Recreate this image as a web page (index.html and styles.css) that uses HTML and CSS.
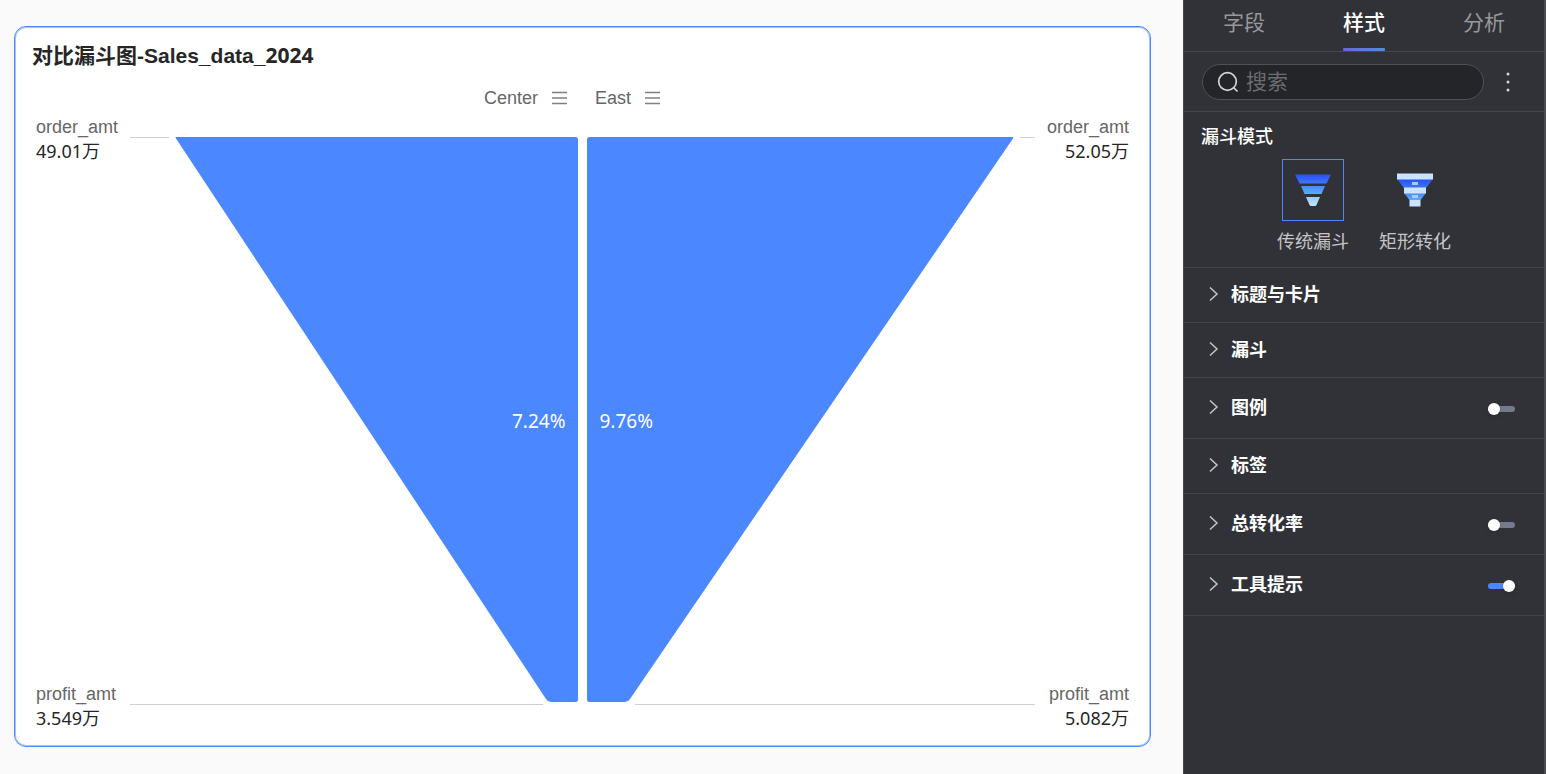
FILE: index.html
```html
<!DOCTYPE html>
<html lang="zh-CN">
<head>
<meta charset="utf-8">
<title>对比漏斗图</title>
<link rel="stylesheet" href="styles.css">
</head>
<body>
<div class="app">
  <main class="canvas">
    <section class="card">
      <h1 class="card-title">对比漏斗图-Sales_data_<span class="num">2024</span></h1>
      <div class="legend">
        <span class="legend-item">Center
          <svg class="menu-icon" width="16" height="14" viewBox="0 0 16 14"><path d="M0 1.5h15M0 7h15M0 12.5h15"/></svg>
        </span>
        <span class="legend-item">East
          <svg class="menu-icon" width="16" height="14" viewBox="0 0 16 14"><path d="M0 1.5h15M0 7h15M0 12.5h15"/></svg>
        </span>
      </div>
      <div class="chart">
        <div class="axis">
          <div class="stage"><span class="stage-name">order_amt</span><span class="stage-value">49.01万</span></div>
          <div class="stage"><span class="stage-name">profit_amt</span><span class="stage-value">3.549万</span></div>
        </div>
        <div class="plot">
          <svg class="funnel" viewBox="0 0 905 615" preserveAspectRatio="none">
            <path class="leader" d="M0 22.5H39M890 22.5H905M0 589.5H413M505 589.5H905"/>
            <path class="shape" d="M45.500 22H445.500Q448 22 448 24.500V584.500Q448 587 445.500 587H421Q418 587 416 584L46 23.500Z"/>
            <path class="shape" d="M883.500 22H459.500Q457 22 457 24.500V584.500Q457 587 459.500 587H495Q498 587 500 584L883 23.500Z"/>
          </svg>
          <div class="rates"><span class="rate rate-left">7.24%</span><span class="rate">9.76%</span></div>
        </div>
        <div class="axis axis-right">
          <div class="stage"><span class="stage-name">order_amt</span><span class="stage-value">52.05万</span></div>
          <div class="stage"><span class="stage-name">profit_amt</span><span class="stage-value">5.082万</span></div>
        </div>
      </div>
    </section>
  </main>

  <aside class="panel">
    <nav class="tabs">
      <button class="tab" type="button">字段</button>
      <button class="tab active" type="button">样式</button>
      <button class="tab" type="button">分析</button>
    </nav>
    <div class="search-row">
      <label class="search">
        <svg width="22" height="22" viewBox="0 0 22 22" fill="none" stroke="#d4d5d7" stroke-width="1.700"><circle cx="10.500" cy="10.500" r="8.800"/><path d="M16.500 16.500L20.500 20.500"/></svg>
        <input class="search-input" type="text" placeholder="搜索" aria-label="搜索">
      </label>
      <button class="more" type="button" aria-label="更多">
        <svg width="4" height="20" viewBox="0 0 4 20" fill="#d4d5d7"><circle cx="2" cy="2" r="1.500"/><circle cx="2" cy="10" r="1.500"/><circle cx="2" cy="18" r="1.500"/></svg>
      </button>
    </div>
    <section class="mode">
      <h2 class="mode-title">漏斗模式</h2>
      <div class="mode-options">
        <button class="option selected" type="button">
          <span class="option-box">
            <svg width="38" height="36" viewBox="0 0 38 36">
              <defs>
                <linearGradient id="deep" x1="0" y1="0" x2="0" y2="1"><stop offset="0" stop-color="#2850f5"/><stop offset="1" stop-color="#3f76fc"/></linearGradient>
                <linearGradient id="sky" x1="0" y1="0" x2="0" y2="1"><stop offset="0" stop-color="#448af8"/><stop offset="1" stop-color="#5fabff"/></linearGradient>
                <linearGradient id="pale" x1="0" y1="0" x2="0" y2="1"><stop offset="0" stop-color="#9cc8fc"/><stop offset="1" stop-color="#c0e6fd"/></linearGradient>
              </defs>
              <path fill="url(#deep)" d="M1 2.500H37L32.500 11.500H5.500Z"/>
              <path fill="url(#sky)" d="M7 14H31L27.500 22H10.500Z"/>
              <path fill="url(#pale)" d="M12 25H26L22.500 33Q22 34 21 34H17Q16 34 15.500 33Z"/>
            </svg>
          </span>
          传统漏斗
        </button>
        <button class="option" type="button">
          <span class="option-box">
            <svg width="38" height="36" viewBox="0 0 38 36">
              <path fill="url(#deep)" d="M1 7H37L30 16H8Z"/>
              <path fill="url(#sky)" d="M8 21H30L24.500 28H13.500Z"/>
              <path fill="#cbe4fd" d="M1 1.500H37V7.500H1ZM8 15.500H30V21.500H8ZM13.500 28H24.500V34.500H13.500Z"/>
              <path fill="#a9c9ff" d="M16 10H22V13H16ZM16 23H22V26H16Z"/>
            </svg>
          </span>
          矩形转化
        </button>
      </div>
    </section>
    <div class="row"><button class="row-name" type="button"><svg class="chevron" width="10" height="16" viewBox="0 0 10 16"><path d="M1 0.500L8 7L1 13.500"/></svg>标题与卡片</button></div>
    <div class="row"><button class="row-name" type="button"><svg class="chevron" width="10" height="16" viewBox="0 0 10 16"><path d="M1 0.500L8 7L1 13.500"/></svg>漏斗</button></div>
    <div class="row row-tall"><button class="row-name" type="button"><svg class="chevron" width="10" height="16" viewBox="0 0 10 16"><path d="M1 0.500L8 7L1 13.500"/></svg>图例</button><input class="switch" type="checkbox" aria-label="图例"></div>
    <div class="row"><button class="row-name" type="button"><svg class="chevron" width="10" height="16" viewBox="0 0 10 16"><path d="M1 0.500L8 7L1 13.500"/></svg>标签</button></div>
    <div class="row row-tall"><button class="row-name" type="button"><svg class="chevron" width="10" height="16" viewBox="0 0 10 16"><path d="M1 0.500L8 7L1 13.500"/></svg>总转化率</button><input class="switch" type="checkbox" aria-label="总转化率"></div>
    <div class="row row-tall"><button class="row-name" type="button"><svg class="chevron" width="10" height="16" viewBox="0 0 10 16"><path d="M1 0.500L8 7L1 13.500"/></svg>工具提示</button><input class="switch" type="checkbox" aria-label="工具提示" checked></div>
  </aside>
</div>
</body>
</html>
```
FILE: styles.css
```css
* {
  box-sizing: border-box;
}

body {
  margin: 0;
  background: #fafafa;
  color: #262626;
  font-family: "Liberation Sans", "Noto Sans CJK SC", sans-serif;
  font-size: 18px;
  line-height: 24px;
}

button,
input {
  margin: 0;
  padding: 0;
  border: 0;
  background: none;
  color: inherit;
  font: inherit;
}

svg {
  display: block;
  flex: none;
}

.app {
  display: flex;
  min-height: 100vh;
}

.canvas {
  flex: 1;
  display: flex;
  padding: 26px 32px 28px 14px;
}

/* Chart card */
.card {
  flex: 1;
  display: flex;
  flex-direction: column;
  padding: 13px 21px 16px;
  border: 1px solid #4b87ff;
  border-radius: 12px;
  background: #fff;
  box-shadow: inset 0 0 0 1px #a5c3ff;
}

.card-title {
  margin: 0 -4px;
  font-size: 21px;
  line-height: 30px;
  font-weight: 700;
}

.card-title .num,
.stage-value,
.rate {
  font-family: "Noto Sans", "Noto Sans CJK SC", sans-serif;
}

.legend {
  display: flex;
  justify-content: center;
  gap: 27px;
  margin-top: 15px;
  padding-right: 20px;
  color: #666;
}

.legend-item {
  display: flex;
  align-items: center;
  gap: 14px;
}

.menu-icon {
  fill: none;
  stroke: #808080;
  stroke-width: 1.500;
}

.chart {
  flex: 1;
  display: grid;
  grid-template-columns: 94px 1fr 94px;
  margin-top: 5px;
}

.axis {
  display: flex;
  flex-direction: column;
  justify-content: space-between;
}

.axis-right {
  text-align: right;
}

.stage {
  display: flex;
  flex-direction: column;
}

.stage-name {
  color: #666;
}

.plot {
  display: grid;
}

.funnel,
.rates {
  grid-area: 1 / 1;
  width: 100%;
  height: 100%;
}

.leader {
  fill: none;
  stroke: #d0d0d0;
}

.shape {
  fill: #4b87ff;
}

.rates {
  display: grid;
  grid-template-columns: 1fr 1fr;
  align-items: center;
  gap: 34px;
  padding-bottom: 4px;
  color: #fff;
  font-size: 19px;
}

.rate-left {
  text-align: right;
}

/* Settings panel */
.panel {
  width: 363px;
  border-left: 1px solid #46474b;
  border-right: 2px solid #4b4c50;
  background: #313237;
  color: #fff;
}

.tabs {
  display: flex;
  height: 52px;
  border-bottom: 1px solid #47484d;
}

.tab {
  flex: 1;
  display: flex;
  flex-direction: column;
  align-items: center;
  justify-content: space-between;
  padding-top: 8px;
  color: #98989b;
  font-size: 21px;
  line-height: 30px;
}

.tab::after {
  content: "";
  width: 42px;
  height: 3px;
  border-radius: 1px;
}

.tab.active {
  color: #fff;
  font-weight: 500;
}

.tab.active::after {
  background: linear-gradient(90deg, #6868d8, #4f8fdb);
}

.search-row {
  display: flex;
  align-items: center;
  gap: 22px;
  height: 60px;
  padding: 0 34px 0 18px;
  border-bottom: 1px solid #47484d;
}

.search {
  flex: 1;
  min-width: 0;
  display: flex;
  align-items: center;
  gap: 7px;
  height: 36px;
  padding: 0 14px;
  border: 1px solid #505156;
  border-radius: 18px;
  background: #242529;
}

.search-input {
  flex: 1;
  min-width: 0;
  outline: 0;
  font-size: 21px;
  line-height: 30px;
}

.search-input::placeholder {
  color: #6b6c70;
  opacity: 1;
}

.mode {
  padding: 13px 17px 13px;
  border-bottom: 1px solid #434448;
}

.mode-title {
  margin: 0;
  font-size: 18px;
  font-weight: 500;
}

.mode-options {
  display: flex;
  justify-content: center;
  gap: 30px;
  margin-top: 10px;
}

.option {
  display: flex;
  flex-direction: column;
  align-items: center;
  gap: 9px;
  color: #c5c5c7;
}

.option-box {
  display: flex;
  align-items: center;
  justify-content: center;
  width: 62px;
  height: 62px;
  border: 1px solid transparent;
}

.selected .option-box {
  border-color: #4b87ff;
}

.row {
  display: flex;
  align-items: center;
  height: 55px;
  padding: 0 29px 0 25px;
  border-bottom: 1px solid #434448;
}

.row-tall {
  height: 61px;
}

.row-name {
  flex: 1;
  display: flex;
  align-items: center;
  gap: 12px;
  font-weight: 700;
}

.chevron {
  fill: none;
  stroke: #c5c5c7;
  stroke-width: 1.500;
}

.switch {
  appearance: none;
  display: flex;
  align-items: center;
  width: 27px;
  height: 6px;
  margin-top: 2px;
  border-radius: 3px;
  background: #757b8c;
}

.switch::before {
  content: "";
  width: 12px;
  height: 12px;
  border-radius: 50%;
  background: #fff;
  box-shadow: 0 2px 4px #00230b33;
}

.switch:checked {
  justify-content: flex-end;
  background: #4b87ff;
}
```
